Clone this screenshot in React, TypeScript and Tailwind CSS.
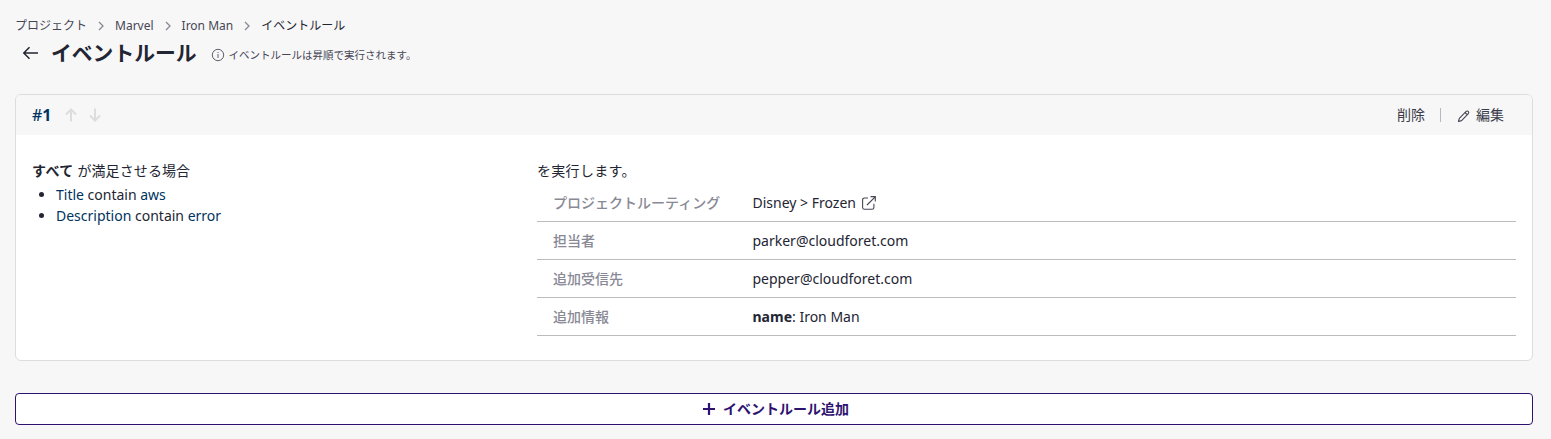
import React from "react";

const breadcrumbs = ["プロジェクト", "Marvel", "Iron Man", "イベントルール"];

function Chevron() {
  return (
    <svg className="mx-2 h-3 w-3 shrink-0" viewBox="0 0 12 12" fill="none" stroke="#898995" strokeWidth="1.3">
      <path d="M4 2l4 4-4 4" />
    </svg>
  );
}

function ArrowUp({ className = "" }: { className?: string }) {
  return (
    <svg className={`h-4 w-4 ${className}`} viewBox="0 0 16 16" fill="none" stroke="#dddddf" strokeWidth="2">
      <path d="M8 14.5V3M3 7.5l5-5 5 5" />
    </svg>
  );
}

function Row({ label, children }: { label: string; children: React.ReactNode }) {
  return (
    <div className="flex h-[38px] items-center border-b border-[#bcbcbc] pl-4">
      <div className="w-[199.5px] shrink-0 font-medium text-[#898995]">{label}</div>
      <div className="flex items-center">{children}</div>
    </div>
  );
}

export default function App() {
  return (
    <div className="h-[439px] overflow-hidden bg-[#f7f7f7] pr-[18px] pl-[15px] pt-4 font-['Noto_Sans','Noto_Sans_CJK_JP',sans-serif] text-sm leading-5 text-[#232533]">
      <nav className="flex h-5 items-center text-xs text-[#464656]">
        {breadcrumbs.map((name, i) => (
          <React.Fragment key={name}>
            {i > 0 && <Chevron />}
            <span className={i === 3 ? "text-[#232533]" : ""}>{name}</span>
          </React.Fragment>
        ))}
      </nav>

      <header className="flex h-[34px] items-center pl-[7px]">
        <svg className="h-5 w-[18px]" viewBox="0 0 18 20" fill="none" stroke="#232533" strokeWidth="1.5">
          <path d="M16 10H2M7.5 4.2L1.8 10l5.7 5.8" />
        </svg>
        <h1 className="ml-[11px] text-[20.8px] leading-8 font-bold">イベントルール</h1>
        <svg className="mt-[3px] ml-3.5 h-3.5 w-3.5" viewBox="0 0 14 14" fill="none" stroke="#60606f" strokeWidth="1">
          <circle cx="7" cy="7" r="5.7" />
          <path d="M7 6v4M7 4v1" />
        </svg>
        <span className="mt-[3px] ml-1 text-[10.5px] text-[#464656]">イベントルールは昇順で実行されます。</span>
      </header>

      <section className="mt-6 h-[267px] overflow-hidden rounded-md border border-[#dddddf] bg-white">
        <div className="flex h-10 items-center bg-[#f7f7f7] pr-7 pl-4">
          <span className="text-base font-bold text-[#00335f]"><span className="font-medium">#</span>1</span>
          <ArrowUp className="ml-[11px]" />
          <ArrowUp className="ml-2 rotate-180" />
          <span className="ml-auto text-[#3a3c4c]">削除</span>
          <span className="mx-[15px] h-3.5 w-px bg-[#b8b8c0]" />
          <svg className="mt-0.5 mr-1 h-4 w-4" viewBox="0 0 16 16" fill="none" stroke="#464656" strokeWidth="1.1" strokeLinejoin="round">
            <path d="M2.5 13.5l.8-3.2 6.6-6.7c.9-.9 1.8-.8 2.4-.2s.7 1.5-.2 2.4l-6.5 6.8zM9 4.5l2.4 2.4" />
          </svg>
          <span className="text-[#3a3c4c]">編集</span>
        </div>
        <div className="flex pt-[26px] pr-4 pl-4">
          <div className="w-[505px] shrink-0">
            <p><strong className="tracking-[0.4px]">すべて</strong><span className="tracking-[0.1px]"> が満足させる場合</span></p>
            <ul className="mt-[3px] list-disc pl-6 leading-[21px]">
              <li><span className="text-[#00335f]">Title</span> contain <span className="text-[#00335f]">aws</span></li>
              <li><span className="text-[#00335f]">Description</span> contain <span className="text-[#00335f]">error</span></li>
            </ul>
          </div>
          <div className="grow">
            <p className="tracking-[0.3px]">を実行します。</p>
            <div className="mt-[3px]">
              <Row label="プロジェクトルーティング">
                Disney &gt; Frozen
                <svg className="ml-1.5 h-3.5 w-3.5" viewBox="0 0 14 14" fill="none" stroke="#464656" strokeWidth="1.1">
                  <path d="M6 2H2.5C1.4 2 .6 2.7.6 3.8v7.6c0 1.1.8 1.9 1.9 1.9H10c1.1 0 1.9-.8 1.9-1.9V7.8M8.5.6h4.8v4.8M13.2.8L5 9" />
                </svg>
              </Row>
              <Row label="担当者">parker@cloudforet.com</Row>
              <Row label="追加受信先">pepper@cloudforet.com</Row>
              <Row label="追加情報"><span><strong>name</strong>: Iron Man</span></Row>
            </div>
          </div>
        </div>
      </section>

      <button className="mt-8 flex h-8 w-full items-center justify-center rounded border border-[#2e1270] bg-white pl-1 font-bold text-[#2e1270]">
        <svg className="mr-2 h-3 w-3" viewBox="0 0 12 12" fill="none" stroke="currentColor" strokeWidth="2.2">
          <path d="M6 0v12M0 6h12" />
        </svg>
        イベントルール追加
      </button>
    </div>
  );
}
